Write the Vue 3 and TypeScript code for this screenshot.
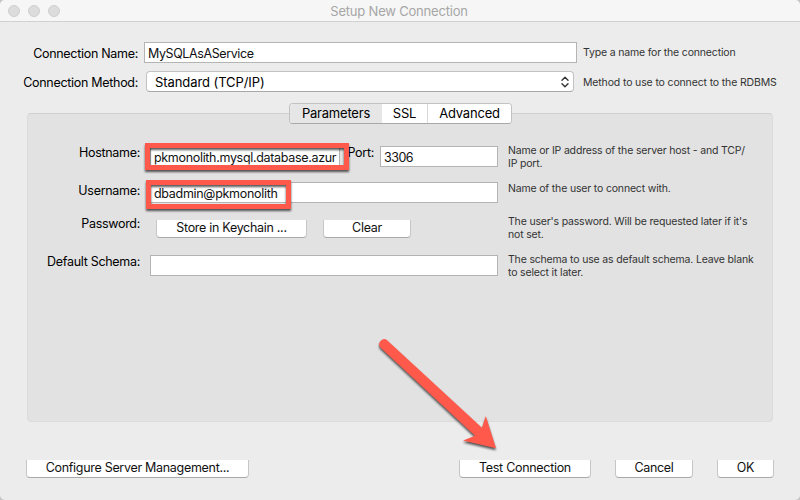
<script setup lang="ts">
import { ref } from 'vue'

const connectionName = ref('MySQLAsAService')
const hostname = ref('pkmonolith.mysql.database.azur')
const port = ref('3306')
const username = ref('dbadmin@pkmonolith')
const schema = ref('')
const tabs: string[] = ['Parameters', 'SSL', 'Advanced']
const activeTab = ref('Parameters')
</script>

<template>
  <div class="window">
    <header class="titlebar">
      <div class="lights"><i></i><i></i><i></i></div>
      <div class="title">Setup New Connection</div>
    </header>

    <section class="top">
      <div class="row name-row">
        <label class="label">Connection Name:</label>
        <input v-model="connectionName" class="field name" />
        <p class="hint">Type a name for the connection</p>
      </div>
      <div class="row method-row">
        <label class="label method-label">Connection Method:</label>
        <div class="select">
          <span>Standard (TCP/IP)</span>
          <svg width="8" height="12" viewBox="0 0 8 12">
            <path d="M1 4.2 4 1.2 7 4.2M1 7.8 4 10.8 7 7.8" fill="none" stroke="#333" stroke-width="1.4" stroke-linecap="round" stroke-linejoin="round" />
          </svg>
        </div>
        <p class="hint method-hint">Method to use to connect to the RDBMS</p>
      </div>
    </section>

    <main class="panel">
      <nav class="tabs">
        <button v-for="t in tabs" :key="t" class="tab" :class="[t.toLowerCase(), { active: t === activeTab }]" @click="activeTab = t">{{ t }}</button>
      </nav>
      <div class="row host-row">
        <label class="label">Hostname:</label>
        <input v-model="hostname" class="field host" />
        <label class="port-label">Port:</label>
        <input v-model="port" class="field port" />
        <p class="hint">Name or IP address of the server host - and TCP/<br />IP port.</p>
      </div>
      <div class="row user-row">
        <label class="label">Username:</label>
        <input v-model="username" class="field wide" />
        <p class="hint">Name of the user to connect with.</p>
      </div>
      <div class="row pass-row">
        <label class="label">Password:</label>
        <div class="pair">
          <button class="btn store">Store in Keychain ...</button>
          <button class="btn clear">Clear</button>
        </div>
        <p class="hint">The user's password. Will be requested later if it's<br />not set.</p>
      </div>
      <div class="row schema-row">
        <label class="label">Default Schema:</label>
        <input v-model="schema" class="field wide" />
        <p class="hint">The schema to use as default schema. Leave blank<br />to select it later.</p>
      </div>
    </main>

    <footer class="footer">
      <button class="btn configure">Configure Server Management...</button>
      <button class="btn test">Test Connection</button>
      <button class="btn cancel">Cancel</button>
      <button class="btn ok">OK</button>
    </footer>

    <svg class="marks" width="800" height="500" viewBox="0 0 800 500">
      <rect x="147.5" y="145.5" width="199" height="22" />
      <rect x="148.5" y="182.5" width="140" height="24" />
      <path d="M387.4 340.4 482 427.8 485.8 416 496 448.2 463 440.5 475 435.8 380.6 347.7A5 5 0 0 1 387.4 340.4Z" />
    </svg>
  </div>
</template>

<style>
body {
  margin: 0;
  background: #ececec;
}
</style>

<style scoped>
.window {
  position: relative;
  width: 800px;
  height: 500px;
  overflow: hidden;
  display: flex;
  flex-direction: column;
  background: #ececec;
  border-radius: 5px;
  box-shadow: 0 0 0 6px #c4c4c4;
  color: #000;
  font: 12.5px/16px Inter, "Liberation Sans", sans-serif;
  letter-spacing: -0.3px;
}
.titlebar {
  box-sizing: border-box;
  height: 22px;
  flex: none;
  display: grid;
  grid-template-columns: 60px 1fr 62px;
  align-items: center;
  background: #f6f6f6;
  border-bottom: 1px solid #d1d1d1;
}
.lights {
  display: flex;
  gap: 8px;
  padding-left: 8px;
}
.lights i {
  box-sizing: border-box;
  width: 12px;
  height: 12px;
  border-radius: 50%;
  background: #dcdcdc;
  border: 1px solid #cecece;
}
.title {
  text-align: center;
  color: #a6a6a6;
  font-size: 13px;
  letter-spacing: -0.2px;
}
.row {
  display: flex;
  align-items: flex-start;
}
.label {
  flex: none;
  text-align: right;
  white-space: nowrap;
}
.field {
  box-sizing: border-box;
  height: 21px;
  flex: none;
  border: 1px solid #b4b4b4;
  border-radius: 0;
  outline: none;
  background: #fff;
  color: #111;
  padding: 1px 3px 0;
  margin: 0;
  font: inherit;
  letter-spacing: inherit;
}
.hint {
  margin: 0;
  color: #333;
  font-size: 10.5px;
  line-height: 13px;
  letter-spacing: -0.17px;
  white-space: nowrap;
}
.top {
  flex: none;
  padding-top: 20px;
}
.top .label {
  width: 138px;
  padding-top: 4px;
}
.top .hint {
  margin-left: 6px;
  padding-top: 4px;
}
.name {
  width: 433px;
  margin-left: 6px;
  letter-spacing: -0.4px;
}
.name-row {
  height: 29px;
}
.select {
  box-sizing: border-box;
  display: flex;
  justify-content: space-between;
  align-items: center;
  width: 428px;
  height: 21px;
  margin-left: 8px;
  padding: 0 4px 0 8px;
  background: #fff;
  border: 1px solid #c2c2c2;
  border-bottom-color: #a8a8a8;
  border-radius: 4px;
  font-size: 13px;
  letter-spacing: -0.08px;
}
.method-row {
  height: 21px;
}
.top .method-hint {
  margin-left: 9px;
  padding-top: 5px;
  letter-spacing: -0.14px;
}
.panel {
  box-sizing: border-box;
  flex: none;
  width: 746px;
  height: 309px;
  margin: 21px 0 0 27px;
  background: #e2e2e2;
  border: 1px solid #dcdcdc;
  border-top-color: #cfcfcf;
  border-radius: 4px;
}
.tabs {
  box-sizing: border-box;
  display: flex;
  width: 223px;
  height: 21px;
  margin: -11px 0 0 261px;
  background: #fff;
  border: 1px solid #c2c2c2;
  border-bottom-color: #a8a8a8;
  border-radius: 4px;
  overflow: hidden;
}
.tab {
  border: 0;
  padding: 0;
  background: #fff;
  color: #000;
  font: inherit;
  font-size: 13px;
  letter-spacing: -0.2px;
  line-height: 19px;
}
.tab.active {
  background: #e6e6e6;
}
.parameters {
  width: 92px;
}
.ssl {
  width: 46px;
  border-right: 1px solid #d8d8d8;
}
.advanced {
  flex: 1;
}
.panel .label {
  width: 112px;
}
.panel .field {
  margin-left: 10px;
}
.panel .hint {
  margin-left: 10px;
}
.host-row {
  height: 36px;
  padding-top: 22px;
}
.panel .host {
  width: 190px;
  padding-right: 0;
  letter-spacing: -0.32px;
}
.port-label {
  flex: none;
  width: 34px;
  text-align: right;
}
.panel .port {
  width: 118px;
  margin-left: 6px;
  letter-spacing: -0.5px;
}
.host-row .label,
.port-label {
  margin-top: -1px;
}
.host-row .hint {
  margin-top: -2px;
}
.wide {
  width: 348px;
}
.user-row {
  height: 38px;
}
.user-row .label {
  margin-top: 1px;
}
.pass-row {
  height: 35px;
}
.pair {
  display: flex;
  gap: 16px;
  width: 342px;
  margin-left: 16px;
}
.pass-row .label {
  margin-top: -4px;
}
.pass-row .hint {
  margin-top: -5px;
}
.schema-row .label {
  margin-top: -1px;
}
.schema-row .hint {
  margin-top: -2px;
}
.btn {
  box-sizing: border-box;
  height: 18px;
  flex: none;
  padding: 0 0 1px;
  border: 1px solid #c6c6c6;
  border-top: 0;
  border-bottom-color: #a9a9a9;
  border-radius: 0 0 4px 4px;
  background: #fff;
  color: #111;
  font: inherit;
  letter-spacing: inherit;
  line-height: 16px;
  white-space: nowrap;
}
.store {
  width: 151px;
}
.clear {
  width: 88px;
}
.footer {
  display: flex;
  gap: 24px;
  padding: 38px 26px 0;
}
.configure {
  width: 223px;
}
.test {
  width: 132px;
  margin-left: auto;
}
.cancel {
  width: 78px;
}
.ok {
  width: 57px;
}
.marks {
  position: absolute;
  inset: 0;
  pointer-events: none;
  filter: drop-shadow(0 2px 1px rgba(0, 0, 0, 0.65));
}
.marks rect {
  fill: none;
  stroke: #ff594b;
  stroke-width: 5;
}
.marks path {
  fill: #ff594b;
}
</style>
